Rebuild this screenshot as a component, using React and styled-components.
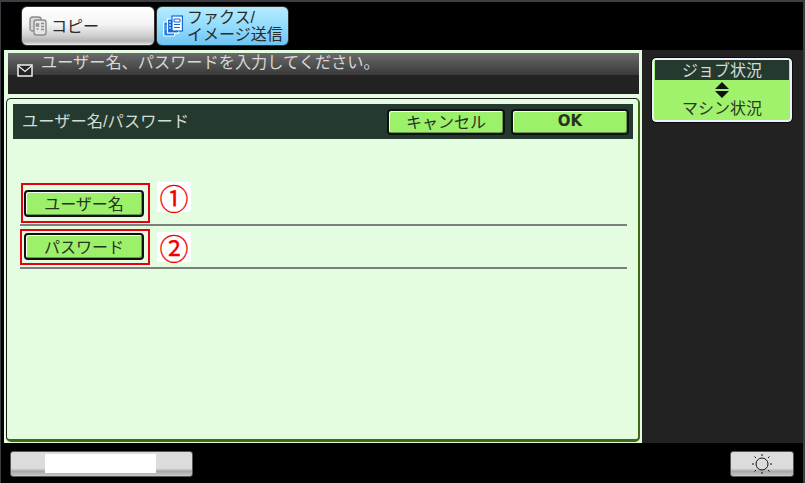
import React from "react";
import styled, { createGlobalStyle } from "styled-components";

const GlobalStyle = createGlobalStyle`
  html, body {
    margin: 0;
    padding: 0;
    background: #000;
  }
  body {
    font-family: "Liberation Sans", "Noto Sans CJK JP", sans-serif;
  }
`;

const Screen = styled.div`
  width: 805px;
  height: 483px;
  box-sizing: border-box;
  background: #000;
  border-top: 2px solid #3c3e44;
  border-left: 1px solid #3c3e44;
  border-right: 2px solid #3c3e44;
  display: flex;
  flex-direction: column;
  overflow: hidden;
`;

const TabBar = styled.div`
  height: 48px;
  padding: 4px 0 0 20px;
  box-sizing: border-box;
  display: flex;
  gap: 1px;
`;

const Tab = styled.div`
  width: ${(p) => p.$width}px;
  height: 40px;
  box-sizing: border-box;
  border: 1px solid #333;
  border-radius: 6px;
  display: flex;
  align-items: center;
  gap: 4px;
  color: #222;
  background: ${(p) =>
    p.$active
      ? "linear-gradient(#b4ecff 0%, #93dcfe 50%, #6fc4f2 100%)"
      : "linear-gradient(#fff 0%, #f4f4f4 45%, #d0d0d0 75%, #b4b4b4 90%, #e8e8e8 100%)"};
  padding-left: ${(p) => (p.$active ? 6 : 7)}px;
`;

const TabLabel = styled.span`
  font-size: 16px;
  line-height: 17px;
  color: #2a2a2a;
  white-space: pre;
`;

const Main = styled.div`
  flex: none;
  height: 393px;
  display: flex;
`;

const Content = styled.div`
  width: 638px;
  margin-left: 3px;
  box-sizing: border-box;
  background: #e4fde0;
  padding: 3px 3px 0 4px;
  display: flex;
  flex-direction: column;
  gap: 4px;
`;

const Message = styled.div`
  height: 41px;
  flex: none;
  box-sizing: border-box;
  background: linear-gradient(#6a6a6a 0%, #3a3a3a 53%, #222 53%, #222 100%);
  color: #d8d8d8;
  font-size: 16.2px;
  display: flex;
  align-items: flex-start;
  padding-left: 9px;
  gap: 8px;
  line-height: 18px;
`;

const MailIcon = styled.svg`
  margin-top: 11px;
  flex: none;
`;

const Panel = styled.div`
  flex: 1;
  margin: 0 -1px 1px -2px;
  box-sizing: border-box;
  background: #e4fde0;
  border: 1px solid #1c1c1c;
  border-bottom: 3px solid #3f6a12;
  border-right: 2px solid #3f6a12;
  border-radius: 5px;
  padding: 5px 5px 0 6px;
`;

const Header = styled.div`
  height: 35px;
  background: #253a2e;
  display: flex;
  align-items: center;
  color: #d4dcd6;
  font-size: 16.3px;
  padding: 0 4px 0 9px;
`;

const HeaderTitle = styled.span`
  flex: 1;
  margin-top: -3px;
`;

const Actions = styled.div`
  display: flex;
  gap: 6px;
  margin-top: 1px;
`;

const GreenButton = styled.div`
  width: ${(p) => p.$width}px;
  height: ${(p) => p.$height}px;
  box-sizing: border-box;
  background: #9df06a;
  border: 2px solid #111;
  border-radius: 4px;
  box-shadow: inset 1px 1px 0 #f4fff0, inset -1px -1px 0 #6a9a50;
  display: flex;
  align-items: center;
  justify-content: center;
  padding-bottom: 2px;
  font-size: ${(p) => (p.$bold ? 15 : 16)}px;
  color: #26331f;
  font-weight: ${(p) => (p.$bold ? 700 : 400)};
  font-family: ${(p) => (p.$bold ? '"DejaVu Sans", sans-serif' : "inherit")};
`;

const Rows = styled.div`
  margin: 43px 6px 0 7px;
  display: flex;
  flex-direction: column;
`;

const Row = styled.div`
  height: ${(p) => p.$height}px;
  border-bottom: 2px solid #7c807c;
  display: flex;
  align-items: flex-start;
`;

const RedBox = styled.div`
  width: ${(p) => p.$width}px;
  height: ${(p) => p.$boxHeight}px;
  margin-left: ${(p) => p.$left}px;
  margin-top: ${(p) => p.$top}px;
  box-sizing: border-box;
  border: 2px solid #e60012;
  padding: ${(p) => p.$pad};
  flex: none;
`;

const Mark = styled.span`
  width: 34px;
  height: 30px;
  margin-left: 7px;
  margin-top: ${(p) => p.$top}px;
  background: #fff;
  color: #f00000;
  font-size: 29px;
  line-height: 30px;
  font-weight: 400;
  -webkit-text-stroke: 0.3px #f00000;
  text-align: center;
  font-family: "Noto Sans CJK JP", sans-serif;
  flex: none;
`;

const Side = styled.div`
  flex: 1;
  background: #222;
  padding: 8px 0 0 10px;
`;

const StatusButton = styled.div`
  width: 140px;
  height: 64px;
  box-sizing: border-box;
  background: #a0f26c;
  border: 2px solid #eef;
  outline: 1px solid #0c0c0c;
  border-radius: 4px;
  display: flex;
  flex-direction: column;
  align-items: center;
  font-size: 16px;
  line-height: 20px;
  color: #2b3a26;
`;

const StatusTop = styled.div`
  align-self: stretch;
  margin: 0 1px;
  height: 20px;
  line-height: 22px;
  background: #253a2e;
  color: #d4dcd6;
  text-align: center;
`;

const Arrows = styled.svg`
  margin: 2px 0 1px;
  flex: none;
`;

const Footer = styled.div`
  flex: 1;
  display: flex;
  justify-content: space-between;
  padding: 8px 9px 0 9px;
`;

const FooterButton = styled.div`
  box-sizing: border-box;
  width: ${(p) => p.$width}px;
  height: 26px;
  border: 1px solid #555;
  border-radius: 3px;
  background: linear-gradient(#dcdcdc 0%, #dcdcdc 68%, #a8a8a8 80%, #c8c8c8 100%);
  display: flex;
  align-items: center;
  justify-content: center;
`;

const SliderWindow = styled.div`
  width: 111px;
  height: 19px;
  margin: -1px 3px 0 0;
  background: #fff;
`;

const CopyIcon = () => (
  <svg width="18" height="20" viewBox="0 0 18 20" fill="none" stroke="#8c8c8c" strokeWidth="1.4">
    <rect x="1" y="1" width="11" height="14" rx="2.5" fill="#d8d8d8" />
    <rect x="5" y="4" width="12" height="15" rx="2.5" fill="#e6e6e6" />
    <path d="M7.5 8h2v2h-2zM7.5 13h2M12 7.5h3M12 10.5h3M12 13.5h3" />
  </svg>
);

const FaxIcon = () => (
  <svg width="20" height="22" viewBox="0 0 20 22" fill="none">
    <rect x="0.7" y="7" width="11" height="14" rx="1" fill="#1f7ce8" stroke="#fff" strokeWidth="1.2" />
    <rect x="4.5" y="4" width="11" height="14" fill="#1266d8" stroke="#fff" strokeWidth="1.2" />
    <rect x="9" y="1" width="10.4" height="15" fill="#fff" stroke="#1266d8" strokeWidth="1.2" />
    <path d="M6 7h2M6 10h2M6 13h2M2.5 11h1M2.5 14h1" stroke="#fff" />
    <path d="M11 4h6v3h-6zM11 9.5h6M11 12.5h6" stroke="#1266d8" />
  </svg>
);

const SunIcon = () => (
  <svg width="22" height="22" viewBox="0 0 22 22" fill="none" stroke="#111" strokeWidth="1">
    <circle cx="11" cy="11" r="6" />
    <path d="M11 1v2M11 19v2M1 11h2M19 11h2M3.5 3.5l1.5 1.5M17 17l1.5 1.5M18.5 3.5L17 5M5 17l-1.5 1.5" />
  </svg>
);

export default function App() {
  return (
    <>
      <GlobalStyle />
      <Screen>
        <TabBar>
          <Tab $width={134}>
            <CopyIcon />
            <TabLabel>コピー</TabLabel>
          </Tab>
          <Tab $width={133} $active>
            <FaxIcon />
            <TabLabel>{"ファクス/\nイメージ送信"}</TabLabel>
          </Tab>
        </TabBar>
        <Main>
          <Content>
            <Message>
              <MailIcon width="16" height="13" viewBox="0 0 16 13" fill="none">
                <rect x="1" y="1" width="14" height="11" fill="#222" stroke="#eee" strokeWidth="1.5" />
                <path d="M1.5 2l6.5 5.5 6.5-5.5" stroke="#eee" strokeWidth="1.3" />
              </MailIcon>
              ユーザー名、パスワードを入力してください。
            </Message>
            <Panel>
              <Header>
                <HeaderTitle>ユーザー名/パスワード</HeaderTitle>
                <Actions>
                  <GreenButton $width={118} $height={26}>キャンセル</GreenButton>
                  <GreenButton $width={118} $height={26} $bold>OK</GreenButton>
                </Actions>
              </Header>
              <Rows>
                <Row $height={42}>
                  <RedBox $width={129} $boxHeight={40} $left={1} $top={1} $pad="5px 0 0 1px">
                    <GreenButton $width={120} $height={27}>ユーザー名</GreenButton>
                  </RedBox>
                  <Mark $top={0}>①</Mark>
                </Row>
                <Row $height={41}>
                  <RedBox $width={130} $boxHeight={36} $left={0} $top={3} $pad="2px 0 0 2px">
                    <GreenButton $width={120} $height={27}>パスワード</GreenButton>
                  </RedBox>
                  <Mark $top={6}>②</Mark>
                </Row>
              </Rows>
            </Panel>
          </Content>
          <Side>
            <StatusButton>
              <StatusTop>ジョブ状況</StatusTop>
              <Arrows width="14" height="16" viewBox="0 0 14 16" fill="#111">
                <path d="M7 0l7 7H0zM0 9h14l-7 7z" />
              </Arrows>
              マシン状況
            </StatusButton>
          </Side>
        </Main>
        <Footer>
          <FooterButton $width={183}>
            <SliderWindow />
          </FooterButton>
          <FooterButton $width={64}>
            <SunIcon />
          </FooterButton>
        </Footer>
      </Screen>
    </>
  );
}
